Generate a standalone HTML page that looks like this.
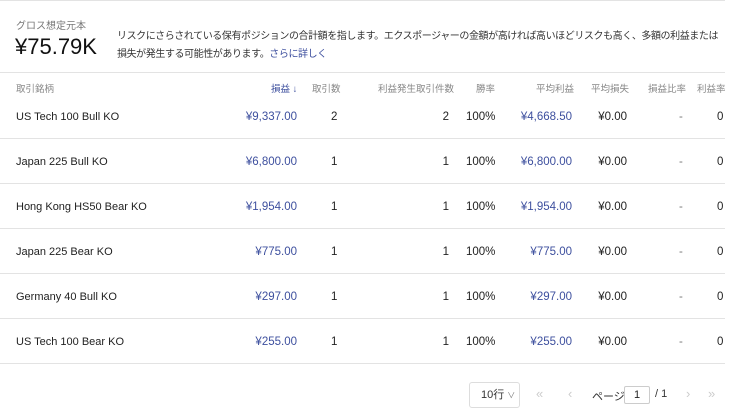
<!DOCTYPE html>
<html><head><meta charset="utf-8"><style>
body{margin:0;width:740px;height:416px;background:#fff;font-family:"Liberation Sans","Noto Sans CJK JP",sans-serif;color:#222;position:relative;overflow:hidden}
.a{position:absolute;white-space:nowrap}
.h{font-size:9.5px;color:#888;top:81px}
.line{position:absolute;left:0;width:725px;height:1px;background:#e3e3e3}
.c{font-size:11.5px}
.b{color:#3d4f9e}
.r{text-align:right}
.d{font-size:10px;color:#333;letter-spacing:-0.42px}
</style></head><body>
<div class="line" style="top:0"></div>
<div class="a" style="left:16px;top:17px;font-size:10px;color:#777">グロス想定元本</div>
<div class="a" style="left:15px;top:34px;font-size:22px;color:#111">¥75.79K</div>
<div class="a d" style="left:117px;top:27px">リスクにさらされている保有ポジションの合計額を指します。エクスポージャーの金額が高ければ高いほどリスクも高く、多額の利益または</div>
<div class="a d" style="left:117px;top:45px">損失が発生する可能性があります。<span class="b">さらに詳しく</span></div>
<div class="line" style="top:72px"></div>
<div class="a h" style="left:16px">取引銘柄</div>
<div class="a h b" style="left:271px">損益 ↓</div>
<div class="a h" style="left:312px">取引数</div>
<div class="a h" style="left:378px">利益発生取引件数</div>
<div class="a h" style="left:476px">勝率</div>
<div class="a h" style="left:536px">平均利益</div>
<div class="a h" style="left:591px">平均損失</div>
<div class="a h" style="left:648px">損益比率</div>
<div class="a h" style="left:697px">利益率</div>
<div id="rows"></div>
<script>
var d=[["US Tech 100 Bull KO","¥9,337.00","2","2","¥4,668.50"],["Japan 225 Bull KO","¥6,800.00","1","1","¥6,800.00"],["Hong Kong HS50 Bear KO","¥1,954.00","1","1","¥1,954.00"],["Japan 225 Bear KO","¥775.00","1","1","¥775.00"],["Germany 40 Bull KO","¥297.00","1","1","¥297.00"],["US Tech 100 Bear KO","¥255.00","1","1","¥255.00"]];
var h="";d.forEach(function(r,i){var t=111+i*45;
h+='<div class="a c" style="left:16px;top:'+t+'px;font-size:11px">'+r[0]+'</div>'+
'<div class="a c b r" style="right:443px;top:'+t+'px">'+r[1]+'</div>'+
'<div class="a c" style="left:331px;top:'+t+'px">'+r[2]+'</div>'+
'<div class="a c r" style="right:291px;top:'+t+'px">'+r[3]+'</div>'+
'<div class="a c" style="left:466px;top:'+t+'px">100%</div>'+
'<div class="a c b r" style="right:168px;top:'+t+'px">'+r[4]+'</div>'+
'<div class="a c r" style="right:113px;top:'+t+'px">¥0.00</div>'+
'<div class="a c" style="left:679px;top:'+t+'px;color:#777">-</div>'+
'<div class="a c" style="left:717px;top:'+t+'px">0</div>'+
'<div class="line" style="top:'+(t+27)+'px"></div>';});
document.getElementById('rows').innerHTML=h;
</script>
<div class="a" style="left:469px;top:382px;width:51px;height:26px;border:1px solid #ddd;border-radius:3px;box-sizing:border-box;font-size:11px;line-height:24px;padding-left:11px;color:#333">10行 <span style="font-size:8px;color:#777">∨</span></div>
<div class="a" style="left:536px;top:386px;font-size:13px;color:#ccc">«</div>
<div class="a" style="left:568px;top:386px;font-size:13px;color:#ccc">‹</div>
<div class="a" style="left:592px;top:388px;font-size:11px;color:#333">ページ</div>
<div class="a" style="left:624px;top:386px;width:26px;height:18px;border:1px solid #ccc;border-radius:2px;box-sizing:border-box;font-size:11px;line-height:16px;text-align:center">1</div>
<div class="a" style="left:655px;top:388px;font-size:11px;color:#333">/ 1</div>
<div class="a" style="left:686px;top:386px;font-size:13px;color:#ccc">›</div>
<div class="a" style="left:708px;top:386px;font-size:13px;color:#ccc">»</div>
</body></html>
